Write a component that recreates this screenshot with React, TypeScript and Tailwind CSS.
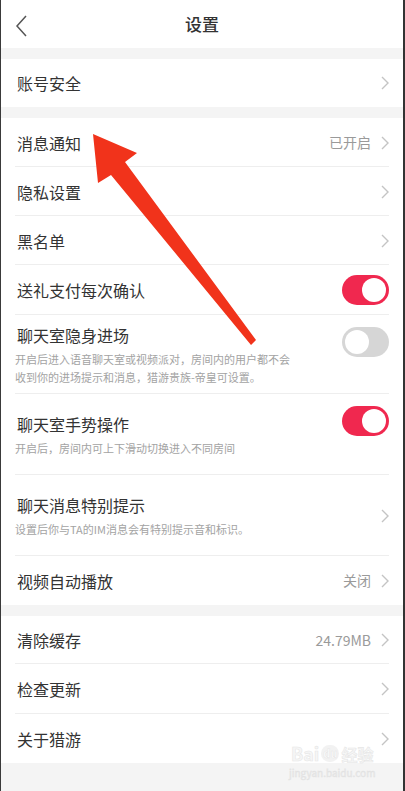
import React from 'react';

type Row = {
  title: string;
  sub?: string;
  value?: string;
  toggle?: 'on' | 'off';
  h: string;
};

const Chevron: React.FC = () => (
  <svg width="8" height="14" viewBox="0 0 8 14" className="shrink-0">
    <path d="M1 1l6 6-6 6" fill="none" stroke="#c4c4c4" strokeWidth="1.4" />
  </svg>
);

const Toggle: React.FC<{ on: boolean }> = ({ on }) =>
  on ? (
    <div className="w-[47px] h-[30px] rounded-full bg-[#f0284f] flex items-center justify-end pr-[3px] shrink-0">
      <div className="w-[24px] h-[24px] rounded-full bg-white" />
    </div>
  ) : (
    <div className="w-[47px] h-[30px] rounded-full bg-[#d6d6d6] flex items-center justify-start pl-[3px] shrink-0">
      <div className="w-[24px] h-[24px] rounded-full bg-white" />
    </div>
  );

const SettingRow: React.FC<{ row: Row; last?: boolean }> = ({ row, last }) => (
  <div className={`${row.h} flex items-center pl-4 pr-[14px] relative`}>
    <div className="flex-1 min-w-0">
      <div className="text-[16px] leading-[22px] text-[#333]">{row.title}</div>
      {row.sub && (
        <div className="text-[11px] leading-[18px] text-[#a3a3a3] mt-[4px] max-w-[280px] -ml-[2px]">{row.sub}</div>
      )}
    </div>
    {row.toggle ? (
      <div className={row.sub ? 'self-start mt-[12px]' : ''}>
        <Toggle on={row.toggle === 'on'} />
      </div>
    ) : (
      <div className="flex items-center gap-[10px]">
        {row.value && <span className="text-[14px] text-[#9a9a9a]">{row.value}</span>}
        <Chevron />
      </div>
    )}
    {!last && <div className="absolute left-[14px] right-[14px] bottom-0 h-px bg-[#eeeeee]" />}
  </div>
);

const group2: Row[] = [
  { title: '消息通知', value: '已开启', h: 'h-[49px]' },
  { title: '隐私设置', h: 'h-[49px]' },
  { title: '黑名单', h: 'h-[49px]' },
  { title: '送礼支付每次确认', toggle: 'on', h: 'h-[50px]' },
  {
    title: '聊天室隐身进场',
    sub: '开启后进入语音聊天室或视频派对，房间内的用户都不会收到你的进场提示和消息，猎游贵族-帝皇可设置。',
    toggle: 'off',
    h: 'h-[79px]',
  },
  { title: '聊天室手势操作', sub: '开启后，房间内可上下滑动切换进入不同房间', toggle: 'on', h: 'h-[81px]' },
  { title: '聊天消息特别提示', sub: '设置后你与TA的IM消息会有特别提示音和标识。', h: 'h-[81px]' },
  { title: '视频自动播放', value: '关闭', h: 'h-[49px]' },
];

const group3: Row[] = [
  { title: '清除缓存', value: '24.79MB', h: 'h-[48px]' },
  { title: '检查更新', h: 'h-[50px]' },
  { title: '关于猎游', h: 'h-[49px]' },
];

export default function App() {
  return (
    <div
      className="relative w-[405px] h-[791px] overflow-hidden bg-[#f4f4f4] border-l border-l-[#3a3a3a] border-r-2 border-r-[#333]"
      style={{ fontFamily: '"Noto Sans CJK SC", "Noto Sans", sans-serif' }}
    >
      {/* 顶部导航 */}
      <div className="h-[48px] bg-white flex items-center relative">
        <svg width="14" height="22" viewBox="0 0 14 22" className="absolute left-[14px] top-[15px]">
          <path d="M11 1L2 11l9 10" fill="none" stroke="#555" strokeWidth="1.5" />
        </svg>
        <div className="flex-1 text-center text-[17px] text-[#333] font-medium">设置</div>
      </div>

      <div className="h-[11px]" />
      <div className="bg-white">
        <SettingRow row={{ title: '账号安全', h: 'h-[48px]' }} last />
      </div>

      <div className="h-[11px]" />
      <div className="bg-white">
        {group2.map((r, i) => (
          <SettingRow key={r.title} row={r} last={i === group2.length - 1} />
        ))}
      </div>

      <div className="h-[11px]" />
      <div className="bg-white">
        {group3.map((r, i) => (
          <SettingRow key={r.title} row={r} last={i === group3.length - 1} />
        ))}
      </div>

      {/* 百度经验水印 */}
      <div className="absolute left-[288px] top-[740px] flex flex-col items-center opacity-50 pointer-events-none">
        <div className="flex items-center gap-[2px] text-[18px] font-bold text-[#eeeeee]" style={{ WebkitTextStroke: '0.6px #cfcfcf' }}>
          <span>Bai</span>
          <span className="text-[11px] bg-[#e6e6e6] rounded-full px-[2px] text-white">du</span>
          <span className="text-[16px]">经验</span>
        </div>
        <div className="text-[10px] text-[#e0e0e0] leading-[12px]" style={{ WebkitTextStroke: '0.4px #cfcfcf' }}>jingyan.baidu.com</div>
      </div>

      {/* 红色箭头 */}
      <svg width="405" height="791" className="absolute left-0 top-0 pointer-events-none">
        <polygon
          points="92,134 136,153 124,162 255,340 250,345 110,175 97,183"
          fill="#f1331b"
        />
      </svg>
    </div>
  );
}
